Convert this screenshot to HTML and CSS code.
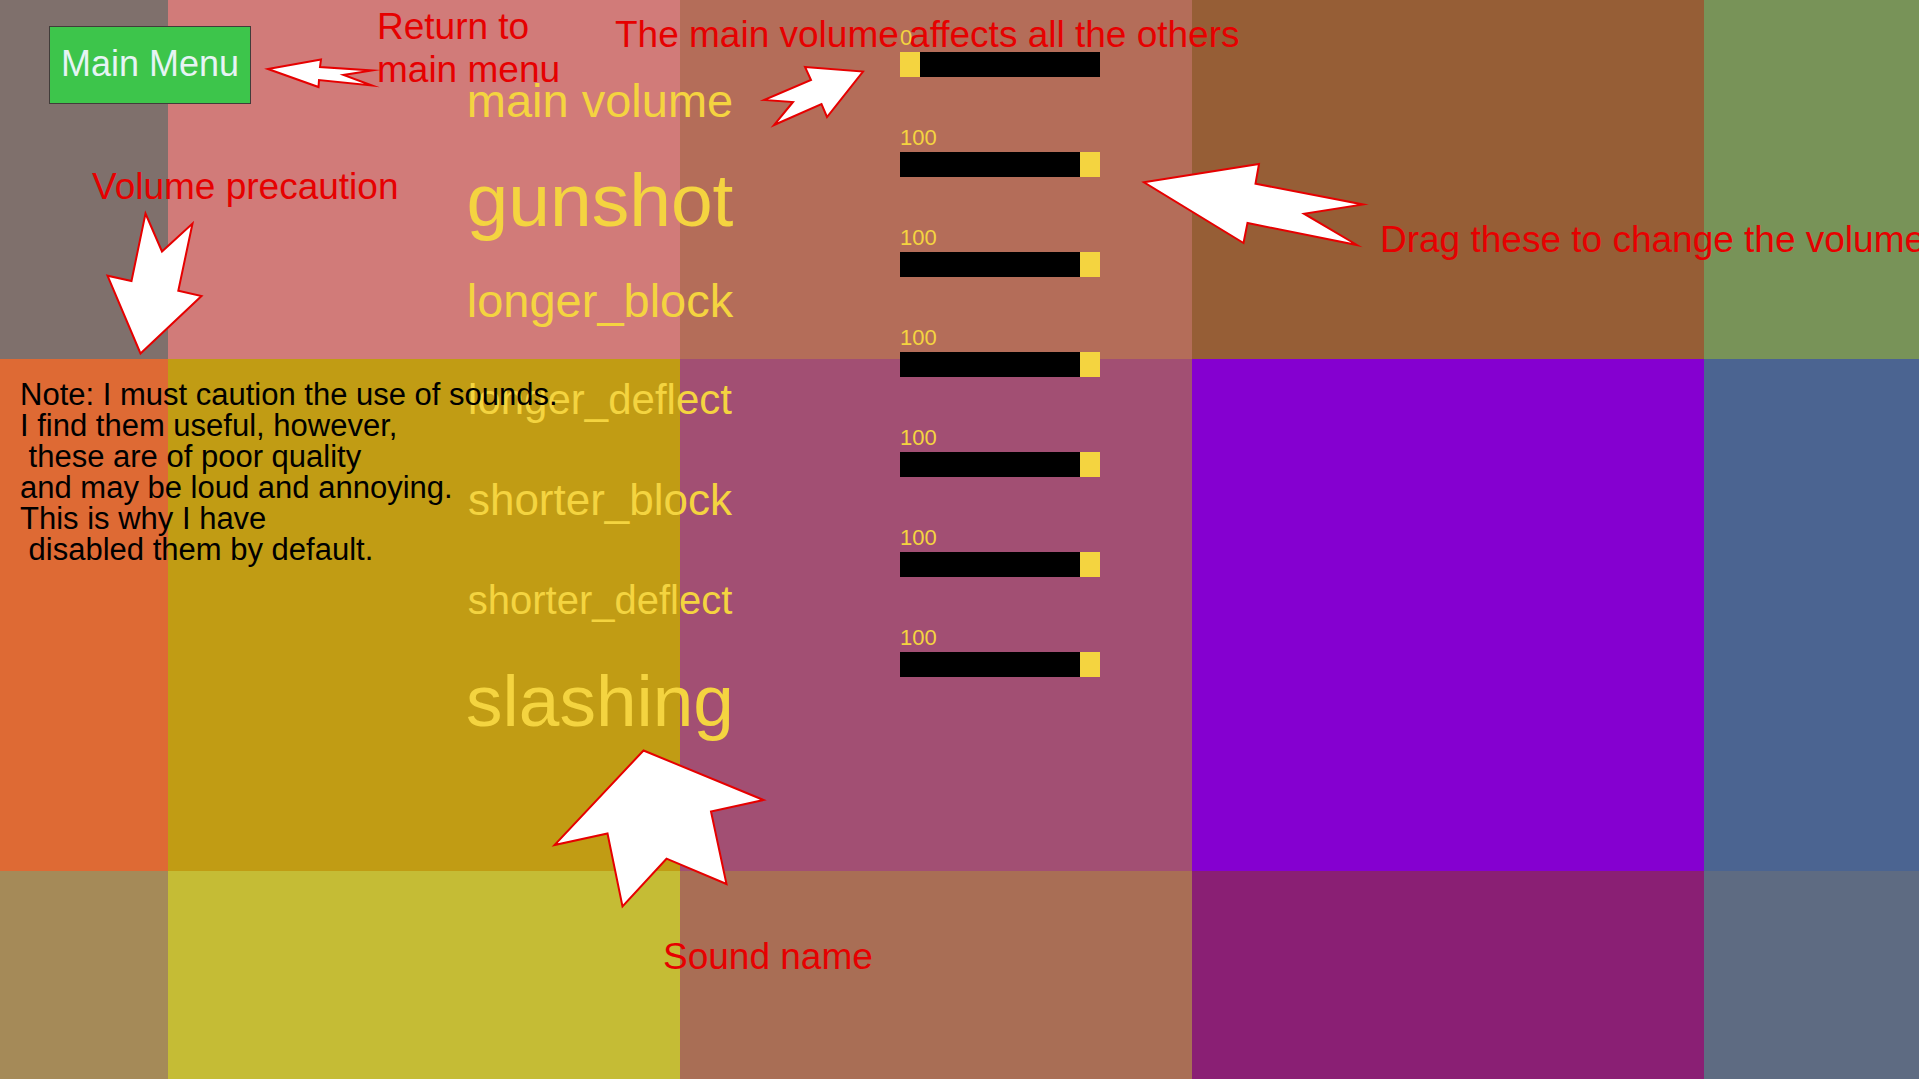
FILE: index.html
```html
<!DOCTYPE html>
<html lang="en">
<head>
<meta charset="utf-8">
<title>Sound settings</title>
<link rel="stylesheet" href="styles.css">
</head>
<body>
<div class="tiles" aria-hidden="true">
  <i class="t1"></i><i class="t2"></i><i class="t3"></i><i class="t4"></i><i class="t5"></i>
  <i class="t6"></i><i class="t7"></i><i class="t8"></i><i class="t9"></i><i class="t10"></i>
  <i class="t11"></i><i class="t12"></i><i class="t13"></i><i class="t14"></i><i class="t15"></i>
</div>
<main class="settings">
  <section class="side">
    <button class="menu-button" type="button">Main Menu</button>
    <p class="note">Note: I must caution the use of sounds.
I find them useful, however,
 these are of poor quality
and may be loud and annoying.
This is why I have
 disabled them by default.</p>
  </section>
  <section class="names">
    <label class="name size-47" for="main-volume">main volume</label>
    <label class="name size-75" for="gunshot">gunshot</label>
    <label class="name size-47" for="longer-block">longer_block</label>
    <label class="name size-42" for="longer-deflect">longer_deflect</label>
    <label class="name size-44" for="shorter-block">shorter_block</label>
    <label class="name size-40" for="shorter-deflect">shorter_deflect</label>
    <label class="name size-73" for="slashing">slashing</label>
  </section>
  <section class="sliders">
    <div class="control"><output for="main-volume">0</output><input id="main-volume" type="range" min="0" max="100" value="0"></div>
    <div class="control"><output for="gunshot">100</output><input id="gunshot" type="range" min="0" max="100" value="100"></div>
    <div class="control"><output for="longer-block">100</output><input id="longer-block" type="range" min="0" max="100" value="100"></div>
    <div class="control"><output for="longer-deflect">100</output><input id="longer-deflect" type="range" min="0" max="100" value="100"></div>
    <div class="control"><output for="shorter-block">100</output><input id="shorter-block" type="range" min="0" max="100" value="100"></div>
    <div class="control"><output for="shorter-deflect">100</output><input id="shorter-deflect" type="range" min="0" max="100" value="100"></div>
    <div class="control"><output for="slashing">100</output><input id="slashing" type="range" min="0" max="100" value="100"></div>
  </section>
</main>
<div class="hints">
  <svg class="arrows" aria-hidden="true">
    <polygon points="268,69 321,59.5 320,67 372,70.5 343.5,75 372,85.5 319,80 318.5,87"/>
    <polygon points="145.5,213.5 162,251.5 192.5,223.5 178.3,290.7 201.5,296 140.5,353.5 107.5,275.7 131.5,281"/>
    <polygon points="805,67 863,71.5 827,117 821.5,104 774,125 793,102 764,100 811,80"/>
    <polygon points="1144,182.3 1259,164 1255.5,183.7 1363,204.5 1304,213.7 1357,245 1247.5,223 1243.5,243"/>
    <polygon points="643.5,750.5 763.5,800 711,811.5 726.5,884 666.5,858.7 622.5,906.5 607.5,833.5 554.5,845"/>
  </svg>
  <p class="hint hint-return">Return to<br>main menu</p>
  <p class="hint hint-main">The main volume affects all the others</p>
  <p class="hint hint-caution">Volume precaution</p>
  <p class="hint hint-drag">Drag these to change the volume</p>
  <p class="hint hint-name">Sound name</p>
</div>
</body>
</html>
```
FILE: styles.css
```css
* { box-sizing: border-box; }

body {
  position: relative;
  margin: 0;
  min-height: 100vh;
  overflow: hidden;
  font-family: "Liberation Sans", Arial, sans-serif;
}

/* Coloured floor behind the settings */
.tiles {
  position: absolute;
  inset: 0;
  display: grid;
  grid-template-columns: 168px 512px 512px 512px 1fr;
  grid-template-rows: 359px 512px 1fr;
}
.t1 { background: #7f706c; }
.t2 { background: #d17b79; }
.t3 { background: #b46d59; }
.t4 { background: #965e36; }
.t5 { background: #789358; }
.t6 { background: #de6a34; }
.t7 { background: #c19c14; }
.t8 { background: #a24f73; }
.t9 { background: #8500d0; }
.t10 { background: #4b6491; }
.t11 { background: #a58a58; }
.t12 { background: #c5bc35; }
.t13 { background: #a96e55; }
.t14 { background: #8a1f74; }
.t15 { background: #5e6b82; }

.settings {
  position: relative;
  z-index: 2;
  display: flex;
  align-items: flex-start;
}

.side {
  position: relative;
  z-index: 1;
  width: 465px;
  padding: 26px 0 0 20px;
}
.menu-button {
  display: block;
  width: 202px;
  height: 78px;
  margin-left: 29px;
  padding: 0 0 2px;
  border: 1px solid #413c3a;
  background: #3dc54b;
  color: #e6f4f4;
  font: 36px/40px "Liberation Sans", Arial, sans-serif;
}
.note {
  margin: 275px 0 0;
  color: #000;
  font-size: 31px;
  line-height: 31px;
  white-space: pre;
}

.names {
  width: 270px;
  padding-top: 50px;
}
.name {
  display: flex;
  align-items: center;
  justify-content: center;
  height: 100px;
  color: #f4d440;
  white-space: nowrap;
}
.size-40 { font-size: 40px; }
.size-42 { font-size: 42px; }
.size-44 { font-size: 44px; }
.size-47 { font-size: 47px; }
.size-73 { font-size: 73px; }
.size-75 { font-size: 75px; }

.sliders {
  width: 200px;
  margin-left: 165px;
  padding-top: 24px;
}
.control {
  height: 100px;
  color: #f4d440;
}
.control output {
  display: block;
  font-size: 22px;
  line-height: 28px;
}
.control input {
  display: block;
  appearance: none;
  width: 100%;
  height: 25px;
  margin: 0;
  background: #000;
}
.control input::-webkit-slider-thumb {
  appearance: none;
  width: 20px;
  height: 25px;
  border: 0;
  border-radius: 0;
  background: #f4d440;
}
.control input::-moz-range-thumb {
  width: 20px;
  height: 25px;
  border: 0;
  border-radius: 0;
  background: #f4d440;
}

/* Tutorial callouts drawn over the screen */
.hints {
  position: absolute;
  inset: 0;
  z-index: 1;
  overflow: hidden;
  pointer-events: none;
}
.arrows {
  width: 100%;
  height: 100%;
  fill: #fff;
  stroke: #e60000;
  stroke-width: 2;
  stroke-miterlimit: 10;
}
.hint {
  position: absolute;
  margin: 0;
  color: #e60000;
  font-size: 37px;
  line-height: 43px;
  white-space: nowrap;
}
.hint-return { left: 377px; top: 5px; }
.hint-main { left: 615px; top: 13px; }
.hint-caution { left: 92px; top: 165px; }
.hint-drag { left: 1380px; top: 218px; }
.hint-name { left: 663px; top: 935px; }
```
